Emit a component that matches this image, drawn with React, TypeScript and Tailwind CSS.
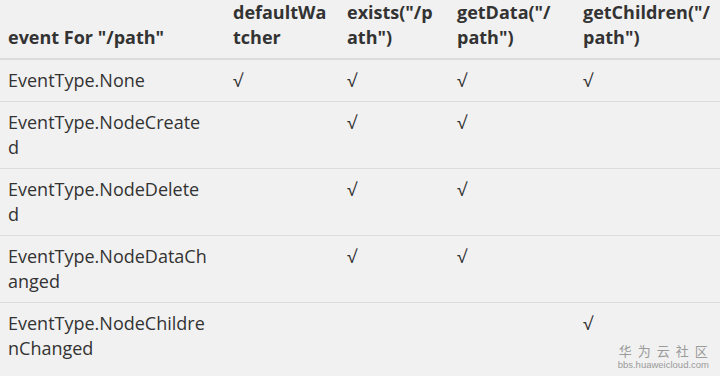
import React from 'react';

// lines are split where the original table wrapped them
const rows: { name: string[]; checks: boolean[] }[] = [
  { name: ['EventType.None'], checks: [true, true, true, true] },
  { name: ['EventType.NodeCreate', 'd'], checks: [false, true, true, false] },
  { name: ['EventType.NodeDelete', 'd'], checks: [false, true, true, false] },
  { name: ['EventType.NodeDataCh', 'anged'], checks: [false, true, true, false] },
  { name: ['EventType.NodeChildre', 'nChanged'], checks: [false, false, false, true] },
];

const headers: string[][] = [
  ['event For "/path"'],
  ['defaultWa', 'tcher'],
  ['exists("/p', 'ath")'],
  ['getData("/', 'path")'],
  ['getChildren("/', 'path")'],
];

function Lines({ lines }: { lines: string[] }) {
  return (
    <>
      {lines.map((l, i) => (
        <span key={i} className="block whitespace-nowrap">
          {l}
        </span>
      ))}
    </>
  );
}

export default function App() {
  return (
    <div
      className="relative w-[720px] h-[376px] overflow-hidden bg-[#f1f1f1] text-[#333]"
      style={{ fontFamily: '"Open Sans", "Noto Sans", sans-serif' }}
    >
      <table className="w-[720px] table-fixed border-collapse text-[18px] leading-[25px]">
        <colgroup>
          <col className="w-[225px]" />
          <col className="w-[114px]" />
          <col className="w-[110px]" />
          <col className="w-[126px]" />
          <col className="w-[145px]" />
        </colgroup>
        <thead>
          <tr className="border-b-2 border-[#dcdcdc]">
            {headers.map((h, i) => (
              <th key={i} className="px-2 pt-0 pb-2 text-left align-bottom font-bold">
                <Lines lines={h} />
              </th>
            ))}
          </tr>
        </thead>
        <tbody>
          {rows.map((r) => (
            <tr key={r.name.join('')} className="border-b border-[#dcdcdc] last:border-b-0">
              <td className="px-2 py-2 align-top">
                <Lines lines={r.name} />
              </td>
              {r.checks.map((c, i) => (
                <td key={i} className="px-2 py-2 align-top">
                  {c ? '√' : ''}
                </td>
              ))}
            </tr>
          ))}
        </tbody>
      </table>

      {/* watermark */}
      <div className="absolute right-[11px] bottom-[7px] flex flex-col items-center text-[#9a9a9a] leading-none">
        <span className="text-[13px] tracking-[6px] mr-[-6px]" style={{ fontFamily: '"Noto Sans CJK SC", sans-serif' }}>
          华为云社区
        </span>
        <span className="text-[9.5px] mt-[3px]" style={{ fontFamily: '"Liberation Sans", sans-serif' }}>
          bbs.huaweicloud.com
        </span>
      </div>
    </div>
  );
}
